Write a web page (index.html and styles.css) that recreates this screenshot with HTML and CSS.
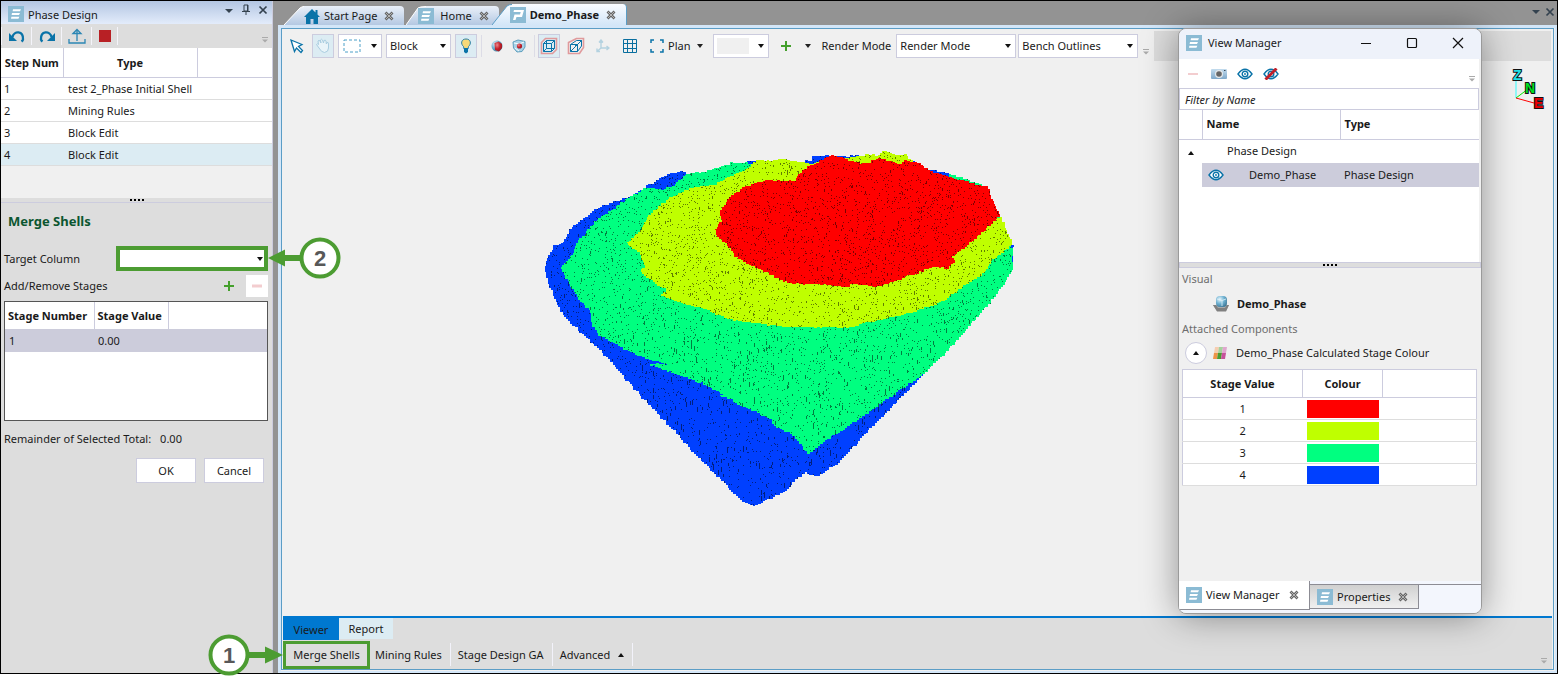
FILE: index.html
```html
<!DOCTYPE html>
<html lang="en">
<head>
<meta charset="utf-8">
<title>Demo_Phase</title>
<link rel="stylesheet" href="styles.css">
</head>
<body>
<svg class="defs" aria-hidden="true">
  <defs>
    <linearGradient id="tabFill" x1="0" y1="0" x2="0" y2="1"><stop offset="0" stop-color="#eaf0f9"/><stop offset="1" stop-color="#b4c8e2"/></linearGradient>
    <linearGradient id="tabOn" x1="0" y1="0" x2="0" y2="1"><stop offset="0" stop-color="#fafcff"/><stop offset="1" stop-color="#d3e6f8"/></linearGradient>
    <radialGradient id="ball" cx=".35" cy=".3" r=".8"><stop offset="0" stop-color="#e8f6fc"/><stop offset=".5" stop-color="#6fb2d2"/><stop offset="1" stop-color="#3c7594"/></radialGradient>
    <radialGradient id="core" cx=".35" cy=".35" r=".8"><stop offset="0" stop-color="#e88a8e"/><stop offset=".5" stop-color="#c4202a"/><stop offset="1" stop-color="#8c1820"/></radialGradient>
    <linearGradient id="cam" x1="0" y1="0" x2="0" y2="1"><stop offset="0" stop-color="#c3dcee"/><stop offset="1" stop-color="#7fa9cb"/></linearGradient>
    <symbol id="i-stack" viewBox="0 0 16 16"><rect width="16" height="16" fill="#8bbbd4"/><path d="M5 3.2h8l-1 2H4.600zM4 7h8l-1 2H3.600zM3.400 10.800h8l-1 2H3z" fill="#fff"/></symbol>
    <symbol id="i-p" viewBox="0 0 16 16"><rect width="16" height="16" fill="#8bbbd4"/><path fill-rule="evenodd" d="M4 3h10l-2 7H6.500l-1 3H3l1.500-5.500h5.500l.7-2.500H3.500z" fill="#fff"/></symbol>
    <symbol id="i-x" viewBox="0 0 10 10"><path d="M1.500 1.500l7 7M8.500 1.500l-7 7" stroke="#666" stroke-width="2.800"/><path d="M2 2l6 6M8 2l-6 6" stroke="#b4b4b4" stroke-width="1"/></symbol>
    <symbol id="i-more" viewBox="0 0 8 8"><path d="M1 1.500h6" stroke="#aaa"/><path d="M1 3.500h6l-3 3z" fill="#aaa"/></symbol>
    <symbol id="i-eye" viewBox="0 0 16 12"><path d="M1 6q7-9.500 14 0q-7 9.500-14 0z" fill="#fff" stroke="#0a73a8" stroke-width="1.400"/><circle cx="8" cy="6" r="2.800" fill="#fff" stroke="#0a73a8" stroke-width="1.400"/><circle cx="8" cy="6" r=".9" fill="#0a73a8"/></symbol>
    <symbol id="i-undo" viewBox="0 0 18 14"><path d="M4.500 8C6 1.500 15.500 1.500 15 10.500Q14.800 11.500 13.500 12.500" fill="none" stroke="#0a73a8" stroke-width="2.300"/><path d="M1 4v8h8z" fill="#0a73a8"/></symbol>
  </defs>
</svg>

<div class="app">
  <aside class="side">
    <header class="side-title">
      <svg class="ic16"><use href="#i-stack"/></svg>
      <h1>Phase Design</h1>
      <button class="plain" aria-label="Panel menu"><svg width="10" height="10"><path d="M1 4h8l-4 4z" fill="#34424f"/></svg></button>
      <button class="plain" aria-label="Pin"><svg width="10" height="12"><path d="M3 1h4v6H3zM1 7.500h8M5 7v4M6.500 1v6" fill="none" stroke="#34424f"/></svg></button>
      <button class="plain" aria-label="Close panel"><svg width="10" height="10"><path d="M1.500 1.500l7 7M8.500 1.500l-7 7" stroke="#34424f" stroke-width="1.700"/></svg></button>
    </header>
    <div class="side-tools">
      <button class="tool" aria-label="Undo"><svg width="18" height="14"><use href="#i-undo"/></svg></button>
      <button class="tool" aria-label="Redo"><svg width="18" height="14" class="flip"><use href="#i-undo"/></svg></button>
      <button class="tool" aria-label="Export"><svg width="18" height="16"><path d="M1 11v4h16v-4M9 13V2M5 5.500L9 1.500l4 4z" fill="none" stroke="#2b86b4" stroke-width="1.300"/></svg></button>
      <button class="tool" aria-label="Stop"><svg width="12" height="12"><path d="M0 0h12v12H0z" fill="#b82025"/></svg></button>
      <svg class="more"><use href="#i-more"/></svg>
    </div>
    <div class="steps">
      <table>
        <colgroup><col class="c-num"><col class="c-type"><col></colgroup>
        <thead><tr><th>Step Num</th><th>Type</th><th></th></tr></thead>
        <tbody>
          <tr><td>1</td><td>test 2_Phase Initial Shell</td><td></td></tr>
          <tr><td>2</td><td>Mining Rules</td><td></td></tr>
          <tr><td>3</td><td>Block Edit</td><td></td></tr>
          <tr class="on"><td>4</td><td>Block Edit</td><td></td></tr>
        </tbody>
      </table>
    </div>
    <div class="split"><i></i><i></i><i></i><i></i></div>
    <form class="merge">
      <h2>Merge Shells</h2>
      <div class="line">
        <label for="target">Target Column</label>
        <div class="pick target">
          <select id="target"><option></option></select>
          <svg class="callout callout-2" width="74" height="42" viewBox="0 0 74 42"><path d="M17 21h18" stroke="#4c9c32" stroke-width="6"/><path d="M0 21L17 12.500v17z" fill="#4c9c32"/><circle cx="52" cy="21" r="18.500" fill="#fff" stroke="#4c9c32" stroke-width="4"/><text x="52" y="29">2</text></svg>
        </div>
      </div>
      <div class="line add">
        <span>Add/Remove Stages</span>
        <button type="button" class="sq" aria-label="Add stage"><svg width="12" height="12"><path d="M1 6h10M6 1v10" stroke="#44a02c" stroke-width="2"/></svg></button>
        <button type="button" class="sq white" aria-label="Remove stage"><svg width="12" height="12"><path d="M1 6h10" stroke="#f3cdcf" stroke-width="3"/></svg></button>
      </div>
      <div class="stages">
        <table>
          <colgroup><col class="c-sn"><col class="c-sv"><col></colgroup>
          <thead><tr><th>Stage Number</th><th>Stage Value</th><th></th></tr></thead>
          <tbody><tr><td>1</td><td>0.00</td><td></td></tr></tbody>
        </table>
      </div>
      <p class="rest"><span>Remainder of Selected Total:</span><span>0.00</span></p>
      <div class="btns"><button type="button">OK</button><button type="button">Cancel</button></div>
    </form>
  </aside>

  <main class="main">
    <nav class="tabs">
      <div class="tab"><svg class="slant" width="20" height="19"><path d="M0 19L16 2Q18 .5 20 .5V19z" fill="url(#tabFill)"/><path d="M0 19L16 2Q18 .5 20 .5" fill="none" stroke="#fff"/></svg>
        <a href="#start"><svg width="16" height="15"><path d="M8 0L0 8h2v7h4.500v-5h3v5H14V8h2l-2.500-2.500V1h-2v2.500z" fill="#0a73a8"/></svg>Start Page</a><button class="plain" aria-label="Close Start Page"><svg width="10" height="10"><use href="#i-x"/></svg></button></div>
      <div class="tab"><svg class="slant" width="20" height="19"><path d="M0 19L12 2Q14 .5 20 .5V19z" fill="url(#tabFill)"/><path d="M0 19L12 2Q14 .5 20 .5" fill="none" stroke="#fff"/></svg>
        <a href="#home" class="home"><svg class="ic16"><use href="#i-stack"/></svg>Home</a><button class="plain" aria-label="Close Home"><svg width="10" height="10"><use href="#i-x"/></svg></button></div>
      <div class="tab on"><svg class="slant" width="20" height="21"><path d="M0 21L15 2Q17 .5 20 .5V21z" fill="url(#tabOn)"/><path d="M0 21L15 2Q17 .5 20 .5" fill="none" stroke="#5b9dc6"/></svg>
        <a href="#phase"><svg class="ic16"><use href="#i-p"/></svg>Demo_Phase</a><button class="plain" aria-label="Close Demo_Phase"><svg width="10" height="10"><use href="#i-x"/></svg></button></div>
      <div class="tabs-end">
        <button class="plain" aria-label="Tab list"><svg width="10" height="10"><path d="M1 3h8l-4 4z" fill="#34424f"/></svg></button>
        <button class="plain" aria-label="Close document"><svg width="10" height="10"><path d="M1.500 1.500l7 7M8.500 1.500l-7 7" stroke="#34424f" stroke-width="1.700"/></svg></button>
      </div>
    </nav>

    <section class="doc">
      <div class="bar">
        <div class="bar-in">
          <button class="tb" aria-label="Select"><svg width="16" height="16"><path d="M2 2l11 4.500-3.500 2 4 4-1.500 2-4.500-4.500-2 3.500z" fill="#fff" stroke="#0a73a8" stroke-width="1.300"/></svg></button>
          <button class="tb on" aria-label="Pan"><svg width="16" height="16"><path d="M4 10L1.500 6.500q.5-1.500 2 0L3 3q1-1.500 2 0l1 2-.5-3q1-1.500 2 0L8.500 5l.5-2.500q1.500-1 2 .5l.3 3 .7-1.500q1.500-.5 1.500 1.500v4Q13.500 14 9.500 14.500 6.500 14.500 4 10z" fill="#e9f4f9" stroke="#a9cde0"/></svg></button>
          <div class="pick w44"><select aria-label="Selection shape"><option></option></select><svg class="inpick" width="18" height="14"><path d="M1 1h16v12H1z" fill="none" stroke="#4da0c8" stroke-dasharray="3 2"/></svg></div>
          <div class="pick w65"><select aria-label="Selection unit"><option>Block</option></select></div>
          <button class="tb on" aria-label="Highlight"><svg width="12" height="16"><path d="M6 1C1 1 .5 6 3.500 8.500L4 11h4l.5-2.500C11.500 6 11 1 6 1z" fill="#f8d978" stroke="#2a80a8"/><path d="M4 10h4v4l-2 1.500L4 14z" fill="#0a73a8"/></svg></button>
          <i class="sep"></i>
          <div class="pair">
            <button class="tb" aria-label="Solid"><svg width="12" height="12"><circle cx="6" cy="6" r="5.500" fill="url(#ball)"/><path d="M3.500 3l4-1.500L11 4v4l-3 3.500-4-1.500z" fill="url(#core)"/></svg></button>
            <button class="tb" aria-label="Shell"><svg width="14" height="14"><path d="M1 3l5-2 7 1.500V8l-3 4.500-5 .5-3.500-4z" fill="#a9d2e6" stroke="#5f9fbe"/><path d="M2 4l5 1 5-2M3 9l4 3" stroke="#f4fbfe" fill="none"/><circle cx="7.500" cy="7" r="2.600" fill="url(#core)"/></svg></button>
          </div>
          <i class="sep"></i>
          <div class="pair wide">
            <button class="tb on" aria-label="Perspective"><svg width="18" height="18"><path d="M1.500 5.500l4-4h11v11l-4 4h-11z" fill="none" stroke="#e09a9c" stroke-width="1.600"/><path d="M3.500 6.500h8v8h-8zM6.500 3.500h8v8h-8zM3.500 6.500l3-3M11.500 6.500l3-3M11.500 14.500l3-3M3.500 14.500l3-3" fill="none" stroke="#0a73a8"/></svg></button>
            <button class="tb" aria-label="Oblique"><svg width="18" height="18"><path d="M1.500 5.500l8-4h7v9l-4 6h-11z" fill="none" stroke="#e09a9c" stroke-width="1.600"/><path d="M3.500 7.500h7v7h-7zM3.500 7.500l6-4h5l-4 4M14.500 3.500V9l-4 5.500M3.500 14.500l5-5 6-6M8.500 9.500v-2" fill="none" stroke="#0a73a8"/></svg></button>
            <button class="tb" aria-label="Axes"><svg width="14" height="14"><path d="M5 9V1M5 9l-4 3.500M5 9h8M3 3.500L5 1l2 2.500M1 9.500v3h3M10.500 7l2.500 2-2.500 2" fill="none" stroke="#b4d2e0" stroke-width="1.400"/></svg></button>
            <button class="tb" aria-label="Grid"><svg width="14" height="14"><path d="M.5.5h13v13H.5zM4.500 0v14M9.500 0v14M0 4.500h14M0 9.500h14" fill="none" stroke="#0a6f9f"/></svg></button>
            <button class="tb" aria-label="Zoom extents"><svg width="14" height="14"><path d="M1 4V1h3M10 1h3v3M13 10v3h-3M4 13H1v-3" fill="none" stroke="#0a73a8" stroke-width="1.500"/></svg></button>
          </div>
          <button class="txt plan">Plan<i class="down"></i></button>
          <div class="pick w56"><select aria-label="Background"><option></option></select><i class="swatch"></i></div>
          <button class="txt plus" aria-label="Add"><svg width="12" height="12"><path d="M1 6h10M6 1v10" stroke="#44a02c" stroke-width="2"/></svg><i class="down"></i></button>
          <label for="rm">Render Mode</label>
          <div class="pick w120"><select id="rm"><option>Render Mode</option></select></div>
          <div class="pick w120"><select aria-label="Outlines"><option>Bench Outlines</option></select></div>
          <svg class="more"><use href="#i-more"/></svg>
        </div>
        <div class="bar-rest"></div>
      </div>
      <div class="view">
        <svg id="pit" class="pit" width="480" height="370" viewBox="540 145 480 370" shape-rendering="crispEdges" role="img" aria-label="Phase block model"></svg>
        <svg class="gizmo" width="40" height="46" viewBox="0 0 40 46"><path d="M9 32V13" stroke="#3ff"/><path d="M9 32l12-9" stroke="#0e0"/><path d="M9 32l18 5" stroke="#f00"/><text x="6" y="14" fill="#22e0e6">Z</text><text x="18" y="27" fill="#00e020">N</text><text x="27" y="42" fill="#f00000">E</text></svg>
      </div>
      <div class="foot">
        <div class="foot-tabs"><button class="on">Viewer</button><button>Report</button></div>
        <div class="foot-tools">
          <div class="hot"><button>Merge Shells</button>
            <svg class="callout callout-1" width="76" height="42" viewBox="0 0 76 42"><path d="M40 21h18" stroke="#4c9c32" stroke-width="6"/><path d="M75 21L57 12.500v17z" fill="#4c9c32"/><circle cx="21" cy="21" r="18.500" fill="#fff" stroke="#4c9c32" stroke-width="4"/><text x="21" y="29">1</text></svg>
          </div>
          <button>Mining Rules</button>
          <button>Stage Design GA</button>
          <button>Advanced<i class="up"></i></button>
          <svg class="more"><use href="#i-more"/></svg>
        </div>
      </div>
    </section>
  </main>

  <section class="win">
    <header>
      <svg class="ic16"><use href="#i-stack"/></svg><h2>View Manager</h2>
      <button class="plain" aria-label="Minimise"><svg width="12" height="12"><path d="M1 6.500h10" stroke="#111"/></svg></button>
      <button class="plain" aria-label="Maximise"><svg width="12" height="12"><rect x="1.500" y="1.500" width="9" height="9" rx="1" fill="none" stroke="#111" stroke-width="1.200"/></svg></button>
      <button class="plain" aria-label="Close window"><svg width="12" height="12"><path d="M1 1l10 10M11 1L1 11" stroke="#111" stroke-width="1.200"/></svg></button>
    </header>
    <div class="win-top">
      <div class="win-tools">
        <button class="tb" aria-label="Remove"><svg width="12" height="12"><path d="M1 6h10" stroke="#f3cdcf" stroke-width="2"/></svg></button>
        <button class="tb" aria-label="Snapshot"><svg width="16" height="12"><rect y="1" width="16" height="10" rx="1" fill="url(#cam)"/><circle cx="8" cy="6" r="4" fill="#e4e8ea"/><circle cx="8" cy="6" r="2.800" fill="#666"/><path d="M13 2.500h1.500" stroke="#345"/></svg></button>
        <button class="tb" aria-label="Show"><svg width="16" height="12"><use href="#i-eye"/></svg></button>
        <button class="tb" aria-label="Hide"><svg width="16" height="12"><use href="#i-eye"/><path d="M2.500 11.500L13.500 .5" stroke="#c0202a" stroke-width="3"/></svg></button>
        <svg class="more"><use href="#i-more"/></svg>
      </div>
      <input class="filter" type="text" placeholder="Filter by Name" aria-label="Filter by Name">
      <table class="tree">
        <colgroup><col class="t-a"><col class="t-b"><col></colgroup>
        <thead><tr><th></th><th>Name</th><th>Type</th></tr></thead>
        <tbody>
          <tr><td><i class="up"></i></td><td class="group">Phase Design</td><td></td></tr>
          <tr class="on"><td></td><td><span class="leaf"><svg width="16" height="12"><use href="#i-eye"/></svg>Demo_Phase</span></td><td>Phase Design</td></tr>
        </tbody>
      </table>
    </div>
    <div class="win-split"><i></i><i></i><i></i><i></i></div>
    <div class="win-info">
      <p class="cap">Visual</p>
      <p class="vis"><svg width="18" height="18"><path d="M1 10h16l-3 6H5z" fill="#aaa"/><path d="M5 14h9l-1 2H6z" fill="#e4e4e4"/><path d="M1 10h3l2 3h7l2-3h2l-3 6.500H5z" fill="#808080"/><rect x="4" y="1" width="11" height="11" rx="4" fill="url(#ball)"/><path d="M5 4l5 1.500L14 4M10 5.500V11" stroke="#dff1f9" stroke-width=".8" fill="none"/></svg><b>Demo_Phase</b></p>
      <p class="cap">Attached Components</p>
      <div class="comp"><button class="round" aria-label="Collapse"><i class="up"></i></button><svg width="14" height="12"><path d="M2 0h4L5 6H1z" fill="#f6cdb0"/><path d="M6 0h4L9 6H5z" fill="#a4d29c"/><path d="M10 0h4l-1 6H9z" fill="#e0a6cf"/><path d="M1 6h4l-1 6H0z" fill="#f09448"/><path d="M5 6h4l-1 6H4z" fill="#4c9c32"/><path d="M9 6h4l-1 6H8z" fill="#c6529c"/></svg><span>Demo_Phase Calculated Stage Colour</span></div>
      <table class="colours">
        <colgroup><col class="k-a"><col class="k-b"><col></colgroup>
        <thead><tr><th>Stage Value</th><th>Colour</th><th></th></tr></thead>
        <tbody>
          <tr><td>1</td><td><i class="chip red"></i></td><td></td></tr>
          <tr><td>2</td><td><i class="chip lime"></i></td><td></td></tr>
          <tr><td>3</td><td><i class="chip mint"></i></td><td></td></tr>
          <tr><td>4</td><td><i class="chip blue"></i></td><td></td></tr>
        </tbody>
      </table>
    </div>
    <footer>
      <div class="wtab on"><svg class="ic16"><use href="#i-stack"/></svg><a href="#vm">View Manager</a><button class="plain" aria-label="Close View Manager tab"><svg width="10" height="10"><use href="#i-x"/></svg></button></div>
      <div class="wtab"><svg class="ic16"><use href="#i-stack"/></svg><a href="#props">Properties</a><button class="plain" aria-label="Close Properties tab"><svg width="10" height="10"><use href="#i-x"/></svg></button></div>
      <div class="wrest"></div>
    </footer>
  </section>
</div>
<script src="pit.js"></script>
</body>
</html>
```

FILE: styles.css
```css
* { box-sizing: border-box; }
html, body { margin: 0; height: 100%; }
body { background: #fff; font: 11px/16px "Noto Sans", "Open Sans", sans-serif; color: #1a1a1a; padding-bottom: 4px; }
button, select, input { font: inherit; color: inherit; margin: 0; }
button { background: none; border: 0; padding: 0; display: inline-flex; align-items: center; justify-content: center; white-space: nowrap; }
h1, h2, p { margin: 0; font-size: inherit; font-weight: 400; }
a { color: inherit; text-decoration: none; }
table { border-collapse: collapse; table-layout: fixed; width: 100%; }
th, td { padding: 0 4px; text-align: left; white-space: nowrap; }
th { font-size: 11px; font-weight: 700; }
svg { display: block; flex: none; }
.defs { position: absolute; width: 0; height: 0; }
.ic16 { width: 16px; height: 16px; }
.flip { transform: scaleX(-1); }
.more { width: 8px; height: 8px; }
.app { position: relative; display: flex; gap: 5px; height: 100%; border: 1px solid #000; background: #939393; }

/* left panel */
.side { width: 272px; flex: none; display: flex; flex-direction: column; background: #ddd; border-right: 1px solid #ccccde; position: relative; z-index: 2; }
.side-title { height: 23px; display: flex; align-items: center; gap: 7px; padding: 3px 4px 0 7px; background: linear-gradient(#b3c6e2, #e3ecfb); }
.side-title h1 { flex: 1; margin-left: -3px; padding-top: 1px; }
.side-title .plain { height: 12px; margin-bottom: 8px; }
.side-tools { height: 24px; display: flex; align-items: center; }
.tool { width: 30px; height: 18px; border-left: 1px solid #f4f4fa; }
.tool:nth-of-type(4) { width: 27px; border-right: 1px solid #f4f4fa; }
.side-tools .more { margin: 8px 3px 0 auto; }
.steps { background: #f0f0f0; height: 150px; }
.c-num { width: 62px; } .c-type { width: 134px; }
.steps th { height: 29px; background: #fff; border-right: 1px solid #ccccde; border-bottom: 1px solid #ccccde; text-align: center; padding: 1px 0 0; }
.steps th:last-child { border-right: 0; }
.steps td { height: 22px; background: #fff; border-bottom: 1px solid #ddd; padding: 1px 3px 0; }
.steps td + td { padding-left: 5px; }
.steps .on td { background: #dcecf3; }
.split { height: 5px; border-bottom: 1px solid #ccccde; display: flex; gap: 2px; justify-content: center; align-items: center; }
.split i, .win-split i { width: 2px; height: 2px; background: #000; }
.merge { padding: 0 4px 0 3px; }
.merge h2 { font-size: 13px; line-height: 20px; font-weight: 700; color: #0b5630; padding: 8px 4px 0; height: 42px; }
.line { display: flex; align-items: center; height: 27px; }
.line label { width: 113px; }
.pick { position: relative; background: #fff; border: 1px solid #ccccde; height: 24px; flex: none; }
.pick select { appearance: none; background: none; border: 0; width: 100%; height: 100%; padding: 0 16px 0 3px; display: block; outline: 0; font-size: 11px; }
.pick::after { content: ""; position: absolute; right: 4px; top: 9px; border: 3px solid transparent; border-top: 4px solid #111; border-bottom: 0; }
.target { width: 152px; height: 25px; border: 4px solid #4c9c32; }
.target::after { right: 1px; top: 7px; }
.callout { position: absolute; z-index: 5; }
.callout text { font: 700 22px "Liberation Sans", sans-serif; fill: #585858; text-anchor: middle; }
.callout-2 { left: 148px; top: -13px; }
.callout-1 { right: 83px; top: -10px; }
.add { height: 28px; }
.add span { flex: 1; }
.sq { width: 22px; height: 22px; margin-left: 6px; }
.white { background: #fff; }
.stages { height: 120px; margin: 1px 0 0; background: #fff; border: 1px solid #555; }
.c-sn { width: 89px; } .c-sv { width: 74px; }
.stages th { height: 27px; border-right: 1px solid #ccccde; padding: 0 3px; }
.stages th:last-child { border-right: 0; }
.stages td { height: 23px; padding-top: 1px; background: #ccccdb; }
.rest { padding-top: 10px; display: flex; gap: 9px; }
.btns { display: flex; gap: 8px; justify-content: flex-end; padding: 11px 4px 0 0; }
.btns button { width: 60px; height: 25px; background: #fff; border: 1px solid #ccccde; }

/* documents */
.main { flex: 1; min-width: 0; display: flex; flex-direction: column; }
.tabs { height: 24px; display: flex; align-items: flex-end; padding-left: 6px; flex: none; }
.tab { height: 19px; display: flex; align-items: stretch; margin-right: 2px; background: linear-gradient(#eaf0f9, #b4c8e2) 20px 0 no-repeat; padding-right: 10px; border-radius: 0 4px 0 0; }
.tab a { display: flex; align-items: center; gap: 4px; padding-top: 1px; }
.tab a.home { gap: 6px; margin-left: -8px; }
.tab .plain { margin-left: 7px; }
.tab.on { height: 21px; font-weight: 700; background: linear-gradient(#fafcff, #d3e6f8) 20px 0 no-repeat; border-right: 1px solid #5b9dc6; margin-left: -9px; position: relative; }
.tab.on a { margin-left: -2px; }
.slant { align-self: flex-end; }
.tabs-end { margin-left: auto; display: flex; gap: 4px; padding: 0 2px 8px; }
.doc { flex: 1; min-height: 0; display: flex; flex-direction: column; border: solid #d3e6f8; border-width: 3px 2px 2px 3px; background: #f0f0f0; outline: 1px solid #5b9dc6; outline-offset: -4px; padding: 3px 3px 2px 2px; }
.bar { display: flex; height: 30px; flex: none; }
.bar-in { display: flex; align-items: center; gap: 4px; padding: 0 4px 0 3px; }
.bar-rest { flex: 1; background: #ddd; margin-right: 1px; }
.tb { width: 22px; height: 24px; flex: none; border: 1px solid transparent; }
.tb.on { background: #dcecf3; border-color: #ccccde; }
.w44 { width: 44px; } .w56 { width: 56px; } .w65 { width: 65px; } .w120 { width: 120px; }
label + .w120 { margin-left: 1px; }
.w120 + .w120 { margin-left: -2px; }
.inpick { position: absolute; left: 4px; top: 4px; }
.sep { width: 1px; height: 22px; background: #dcdce6; }
.pair { display: flex; } .wide { gap: 5px; margin-left: -1px; }
.txt { gap: 7px; }
.plan { margin-left: -4px; margin-right: 6px; }
.plus { gap: 13px; margin: 0 6px 0 7px; }
.swatch { position: absolute; left: 3px; top: 3px; width: 32px; height: 16px; background: #f0f0f0; }
.down { border: 3px solid transparent; border-top: 4px solid #222; border-bottom: 0; }
.up { display: inline-block; border: 3px solid transparent; border-bottom: 4px solid #111; border-top: 0; }
.bar .more { margin: 12px 0 0; }
.view { flex: 1; min-height: 0; padding: 84px 0 0 257px; position: relative; overflow: hidden; }
.gizmo { position: absolute; right: 5px; top: 5px; }
.gizmo text { font: 700 14px "Liberation Sans", sans-serif; stroke: #111; stroke-width: 2px; paint-order: stroke; }
.foot { background: #ddd; border-top: 2px solid #0078d0; flex: none; }
.foot-tabs { display: flex; height: 22px; }
.foot-tabs button { width: 56px; height: 22px; padding-top: 1px; }
.foot-tabs button + button { background: #dcecf3; height: 21px; width: 54px; }
.foot-tabs .on { background: #0078d0; }
.foot-tools { display: flex; align-items: center; height: 29px; padding-right: 4px; }
.hot { position: relative; border: 3px solid #4c9c32; height: 28px; width: 87px; display: flex; justify-content: center; }
.foot-tools > button { height: 23px; border-right: 1px solid #f2f2fa; padding: 0 8px 0 7px; gap: 8px; }
.foot-tools > .hot + button { padding-left: 5px; }
.foot-tools .more { margin: 12px 0 0 auto; }

/* floating window */
.win { position: absolute; z-index: 3; top: 27px; right: 75px; width: 304px; background: #f0f0f0; border: 1px solid #9a9a9a; border-radius: 8px; box-shadow: 0 2px 36px rgba(0,0,0,.4); overflow: hidden; padding: 0; }
.win header { height: 30px; background: #eef2fa; display: flex; align-items: center; padding: 0 17px 2px 7px; gap: 34px; }
.win header h2 { flex: 1; margin-left: -28px; }
.win-top { background: #fff; margin: 0 2px 0 0; height: 203px; }
.win-tools { height: 29px; display: flex; align-items: center; gap: 4px; padding-left: 3px; }
.win-tools .more { margin: 10px 3px 0 auto; }
.filter { display: block; width: 100%; height: 22px; border: 1px solid #ccccde; padding: 0 5px; font-style: italic; }
.filter::placeholder { color: #222; opacity: 1; }
.t-a { width: 23px; } .t-b { width: 138px; }
.tree th { height: 29px; border-bottom: 1px solid #ccccde; border-right: 1px solid #ccccde; }
.tree th:last-child { border-right: 0; }
.tree td { height: 24px; }
.tree td:first-child { text-align: center; line-height: 8px; }
.tree .group { padding-left: 25px; }
.tree .on td + td { background: #ccccdb; }
.leaf { display: flex; align-items: center; gap: 25px; padding-left: 2px; }
.win-split { height: 6px; background: #ddd; border: 1px solid #ccccde; display: flex; gap: 2px; justify-content: center; align-items: center; }
.win-info { padding: 3px 4px 0 3px; height: 313px; }
.cap { color: #6d6d6d; line-height: 16px; }
.vis { display: flex; align-items: center; gap: 7px; height: 34px; padding-left: 30px; }
.comp { display: flex; align-items: center; height: 32px; padding-left: 3px; }
.comp svg { margin: 0 9px 0 6px; }
.round { width: 22px; height: 22px; border: 1px solid #ccccde; border-radius: 50%; background: #fff; }
.colours { background: #fff; border: 1px solid #ccccde; }
.k-a { width: 120px; } .k-b { width: 80px; }
.colours th { height: 28px; text-align: center; border: 1px solid #ccccde; }
.colours td { height: 22px; text-align: center; border-bottom: 1px solid #ddd; }
.chip { display: block; height: 18px; width: 72px; }
.red { background: #f00; } .lime { background: #bfff00; } .mint { background: #00ff80; } .blue { background: #0040ff; }
.win footer { display: flex; align-items: flex-start; height: 32px; background: #f3f6fd; }
.wtab { display: flex; align-items: center; width: 131px; height: 29px; gap: 4px; padding: 0 10px 0 7px; background: #fff; border: solid #8c8c94; border-width: 0 1px 1px 0; }
.wtab .plain { margin-left: auto; }
.wtab + .wtab { width: 109px; height: 25px; margin-top: 3px; background: linear-gradient(#d0d0d0, #f0f0f0); border-top-width: 1px; }
.wrest { flex: 1; border-top: 1px solid #8c8c94; margin-top: 3px; }
```

FILE: pit.js
```js
// Draws the phase shells: one ragged polygon per stage, then block-edge marks.
(function () {
  var svg = document.getElementById('pit');
  var NS = 'http://www.w3.org/2000/svg';
  var seed = 7;
  function rnd() { seed = (seed * 16807) % 2147483647; return seed / 2147483647; }
  // The same point always gets the same offset, so shared borders stay shared.
  function wobble(x, y, k) { var v = Math.sin(x * 12.9898 + y * 78.233 + k) * 43758.5453; return (v - Math.floor(v) - 0.5) * 3; }

  var shells = [
    ['#0040ff', '545,267 548,255 553,246 563,242 571,227 602,205 620,200 633,195 646,186 656,180 670,173 680,171 687,173 702,172 715,168 730,163 745,162 756,160 770,161 781,159 800,162 811,160 812,157 828,155 840,157 862,155 878,155 882,151 895,155 905,154 908,159 918,163 925,169 948,174 987,187 1000,217 1013,244 1012,272 1005,284 992,302 980,315 957,342 925,374 900,400 870,430 840,463 820,476 810,474 807,472 795,482 787,491 780,495 770,499 755,506 745,502 733,492 730,487 700,458 665,420 640,394 612,362 590,340 575,326 560,310 552,290 547,278'],
    ['#00ff80', '561,268 573,252 576,243 586,231 594,222 620,203 646,187 661,190 672,186 687,173 702,172 715,168 730,163 745,162 752,164 800,180 940,190 948,174 987,187 1000,217 1010,246 1013,250 1012,272 1005,284 992,302 980,315 957,342 925,374 900,391 862,418 845,429 835,435 808,455 803,446 790,432 781,430 773,422 775,421 740,404 727,397 718,395 726,395 703,383 680,375 650,364 667,364 640,356 625,349 600,335 593,325 590,310 578,297 572,287 566,275'],
    ['#bfff00', '627,243 640,230 648,215 658,206 670,197 690,188 715,184 725,178 745,170 756,160 770,161 781,159 800,162 811,164 822,161 842,158 862,155 878,155 882,151 895,155 905,154 908,159 950,190 990,218 1000,217 1013,244 1008,249 992,261 985,274 966,286 945,301 922,310 895,317 862,324 852,328 790,327 770,325 730,319 710,310 680,302 661,294 665,289 653,281 640,270 645,265 640,252 630,246'],
    ['#ff0000', '714,229 722,219 720,210 729,197 742,187 765,180 794,181 802,170 816,162 828,155 840,158 862,164 878,158 900,164 904,160 918,163 925,169 948,177 987,187 1000,217 988,228 972,243 952,258 955,262 948,268 935,267 905,278 888,284 879,287 853,284 850,287 820,284 797,284 785,281 760,269 735,256 733,250 720,237']
  ];

  function add(parent, name, attrs) {
    var el = document.createElementNS(NS, name);
    for (var k in attrs) el.setAttribute(k, attrs[k]);
    parent.appendChild(el);
    return el;
  }

  function ragged(text) {
    var p = text.split(' ').map(function (s) { return s.split(',').map(Number); });
    var out = [], last = null;
    p.forEach(function (a, i) {
      var b = p[(i + 1) % p.length];
      var n = Math.max(1, Math.round(Math.hypot(b[0] - a[0], b[1] - a[1]) / 3));
      for (var j = 0; j < n; j++) {
        var px = a[0] + (b[0] - a[0]) * j / n;
        var py = a[1] + (b[1] - a[1]) * j / n;
        var x = Math.round(px + wobble(px, py, 1) / 2);
        var y = Math.round(py + wobble(px, py, 2) / 2);
        if (last !== null) out.push(x + ',' + last);
        out.push(x + ',' + y);
        last = y;
      }
    });
    return out.join(' ');
  }

  var clip = add(add(svg, 'defs', {}), 'clipPath', { id: 'pitClip' });
  shells.forEach(function (s, i) {
    var pts = ragged(s[1]);
    add(svg, 'polygon', { points: pts, fill: s[0] });
    if (i === 0) add(clip, 'polygon', { points: pts });
  });

  var d = '';
  for (var y = 150; y < 508; y += 2) {
    var low = Math.max(0, (y - 250) / 250);
    for (var x = 544; x < 1014; x += 2) {
      if (rnd() < 0.22 - low * 0.1) {
        var h = rnd() < 0.06 + low * 0.22 ? 2 + Math.floor(rnd() * (2 + low * 3)) : 1;
        d += 'M' + (x + (rnd() < 0.5 ? 1 : 0)) + ' ' + (y + (rnd() < 0.5 ? 1 : 0)) + 'h1v' + h + 'h-1z';
      }
    }
  }
  add(svg, 'path', { d: d, fill: '#000', 'fill-opacity': '.5', 'clip-path': 'url(#pitClip)' });
})();
```
